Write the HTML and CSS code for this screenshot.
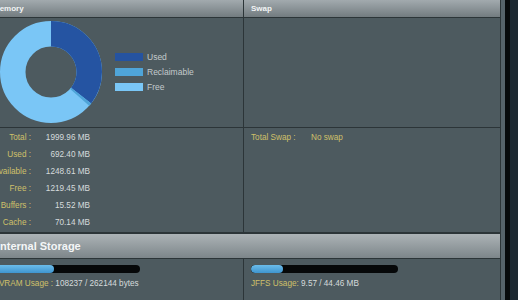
FILE: index.html
```html
<!DOCTYPE html>
<html lang="en">
<head>
    <meta charset="UTF-8">
    <title>Memory / Storage</title>
    <link rel="stylesheet" href="styles.css">
</head>
<body>
    <div class="screen">
        <div class="panel">
            <div class="grid">
                <div class="head">Memory</div>
                <div class="head">Swap</div>

                <div class="cell chart">
                    <svg class="donut" width="102" height="102" viewBox="0 0 102 102">
                        <g transform="rotate(-90 51 51)">
                            <circle cx="51" cy="51" r="38.25" fill="none" stroke="#7ac6f6" stroke-width="25.5" pathLength="360"></circle>
                            <circle cx="51" cy="51" r="38.25" fill="none" stroke="#2554a2" stroke-width="25.5" pathLength="360" stroke-dasharray="128 232"></circle>
                            <circle cx="51" cy="51" r="38.25" fill="none" stroke="#4ea4d8" stroke-width="25.5" pathLength="360" stroke-dasharray="3.5 356.5" stroke-dashoffset="-128"></circle>
                        </g>
                    </svg>
                    <ul class="legend">
                        <li><span class="swatch used"></span>Used</li>
                        <li><span class="swatch reclaim"></span>Reclaimable</li>
                        <li><span class="swatch free"></span>Free</li>
                    </ul>
                </div>
                <div class="cell chart"></div>

                <div class="cell stats">
                    <span class="label">Total :</span><span class="value">1999.96 MB</span>
                    <span class="label">Used :</span><span class="value">692.40 MB</span>
                    <span class="label">Available :</span><span class="value">1248.61 MB</span>
                    <span class="label">Free :</span><span class="value">1219.45 MB</span>
                    <span class="label">Buffers :</span><span class="value">15.52 MB</span>
                    <span class="label">Cache :</span><span class="value">70.14 MB</span>
                </div>
                <div class="cell stats swap">
                    <span class="label">Total Swap :</span><span class="value">No swap</span>
                </div>
            </div>

            <div class="section-head">Internal Storage</div>

            <div class="grid">
                <div class="cell usage">
                    <div class="bar"><div class="fill" style="width: 41.3%"></div></div>
                    <p><span class="label">NVRAM Usage :</span> 108237 / 262144 bytes</p>
                </div>
                <div class="cell usage">
                    <div class="bar"><div class="fill" style="width: 21.5%"></div></div>
                    <p><span class="label">JFFS Usage:</span> 9.57 / 44.46 MB</p>
                </div>
            </div>
        </div>
        <div class="track"></div>
        <div class="shade"></div>
    </div>
</body>
</html>
```

FILE: styles.css
```css
html, body {
    margin: 0;
    padding: 0;
    background: #1c2831;
    overflow: hidden;
}
body {
    font-family: "Liberation Sans", Arial, sans-serif;
    font-size: 8.2px;
    color: #d5dadc;
}
.screen {
    display: flex;
    height: 300px;
}
.panel {
    width: 515px;
    flex: none;
    margin-left: -14px;
    background: #4d5a5f;
}
.track {
    width: 4px;
    background: #56636a;
}
.shade {
    width: 5px;
    background: #070a0c;
}

.grid {
    display: grid;
    grid-template-columns: 258px 257px;
}
.head, .cell, .section-head {
    box-sizing: border-box;
    border-right: 1px solid #2c3538;
    border-bottom: 1px solid #2c3538;
}
.head {
    height: 18px;
    line-height: 17px;
    padding: 0 7px;
    font-size: 8px;
    font-weight: bold;
    color: #f2f4f5;
    background: linear-gradient(#a2aaae, #737c80);
}
.section-head {
    height: 26px;
    line-height: 25px;
    padding: 0 11px;
    font-size: 11px;
    font-weight: bold;
    color: #f4f6f7;
    background: linear-gradient(#acb3b6, #7d868a);
    border-top: 1px solid #2c3538;
}

/* chart */
.chart {
    height: 110px;
    padding: 3px 0 0 14px;
    display: flex;
    align-items: flex-start;
}
.donut {
    display: block;
    flex: none;
}
.legend {
    list-style: none;
    margin: 28px 0 0 13px;
    padding: 0;
    font-size: 8.5px;
    color: #c4cacd;
}
.legend li {
    display: flex;
    align-items: center;
    height: 15px;
}
.swatch {
    width: 28px;
    height: 8px;
    margin-right: 4px;
}
.swatch.used { background: #2553a0; }
.swatch.reclaim { background: #4fa5d9; }
.swatch.free { background: #7ac7f7; }

/* stats */
.stats {
    height: 105px;
    padding: 1px 7px 0;
    display: grid;
    grid-template-columns: 38px 59px;
    grid-auto-rows: 17px;
    align-items: center;
}
.stats .label { text-align: right; }
.stats .value { text-align: right; }
.stats.swap {
    grid-template-columns: 60px 80px;
    align-content: start;
}
.stats.swap .label,
.stats.swap .value {
    text-align: left;
    color: #cfc06a;
}
.label {
    color: #cfc06a;
    white-space: nowrap;
}

/* storage */
.usage {
    height: 45px;
    padding: 6px 7px 0;
}
.bar {
    width: 147px;
    height: 8px;
    border-radius: 4px;
    background: #060809;
    overflow: hidden;
}
.fill {
    height: 100%;
    border-radius: 4px;
    background: linear-gradient(#6bbcea, #3f95cf);
}
.usage p {
    margin: 5px 0 0;
    line-height: 12px;
    white-space: nowrap;
}
```
